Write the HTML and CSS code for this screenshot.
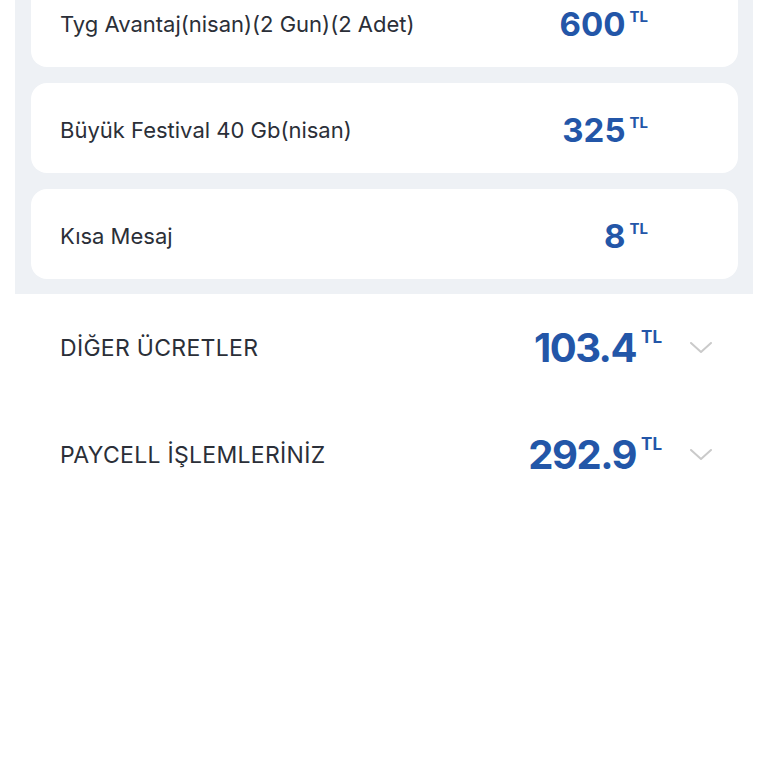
FILE: index.html
```html
<!DOCTYPE html>
<html lang="tr">
<head>
    <meta charset="UTF-8">
    <meta name="viewport" content="width=device-width, initial-scale=1.0">
    <title>Fatura Detayı</title>
    <link rel="stylesheet" href="styles.css">
</head>
<body>
  <div class="panel">
    <div class="card">
      <span class="label">Tyg Avantaj(nisan)(2 Gun)(2 Adet)</span>
      <span class="price"><span class="num">600</span><span class="cur">TL</span></span>
    </div>
    <div class="card">
      <span class="label">Büyük Festival 40 Gb(nisan)</span>
      <span class="price"><span class="num">325</span><span class="cur">TL</span></span>
    </div>
    <div class="card">
      <span class="label">Kısa Mesaj</span>
      <span class="price"><span class="num">8</span><span class="cur">TL</span></span>
    </div>
  </div>

  <div class="row">
    <span class="row-title">DİĞER ÜCRETLER</span>
    <span class="price big"><span class="num">103.4</span><span class="cur">TL</span></span>
    <svg class="chevron" width="22" height="12" viewBox="0 0 22 12"><path d="M1 1 L11 10 L21 1" fill="none" stroke="#cacaca" stroke-width="2" stroke-linecap="round" stroke-linejoin="round"/></svg>
  </div>
  <div class="row">
    <span class="row-title">PAYCELL İŞLEMLERİNİZ</span>
    <span class="price big"><span class="num">292.9</span><span class="cur">TL</span></span>
    <svg class="chevron" width="22" height="12" viewBox="0 0 22 12"><path d="M1 1 L11 10 L21 1" fill="none" stroke="#cacaca" stroke-width="2" stroke-linecap="round" stroke-linejoin="round"/></svg>
  </div>
</body>
</html>
```

FILE: styles.css
```css
body {
  margin: 0;
  background: #fff;
  font-family: Inter, "Noto Sans", sans-serif;
  color: #2b2f38;
}

/* grey block with the package cards, page is scrolled a bit */
.panel {
  margin: -39px 15px 0 15px;
  padding: 16px 15px 15px 16px;
  background: #eef1f5;
  display: flex;
  flex-direction: column;
  gap: 16px;
}

.card {
  height: 90px;
  box-sizing: border-box;
  background: #fff;
  border-radius: 16px;
  display: flex;
  align-items: center;
  padding: 4px 90px 0 29px;
}

.label {
  flex: 1;
  font-size: 22px;
}

.price {
  display: flex;
  align-items: flex-start;
  color: #2356a8;
  font-weight: 700;
}

.price .num {
  font-size: 33px;
  line-height: 1;
}

.price .cur {
  font-size: 15px;
  margin-left: 4px;
  margin-top: -1px;
}

.row {
  height: 106px;
  display: flex;
  align-items: center;
  padding: 0 56px 0 60px;
  margin-top: 1px;
}

.row-title {
  flex: 1;
  font-size: 23px;
  letter-spacing: 0.3px;
}

.price.big .num {
  font-size: 40px;
  letter-spacing: -1.5px;
}

.price.big .cur {
  font-size: 17px;
  margin-left: 5px;
}

.chevron {
  margin-left: 28px;
}
```
